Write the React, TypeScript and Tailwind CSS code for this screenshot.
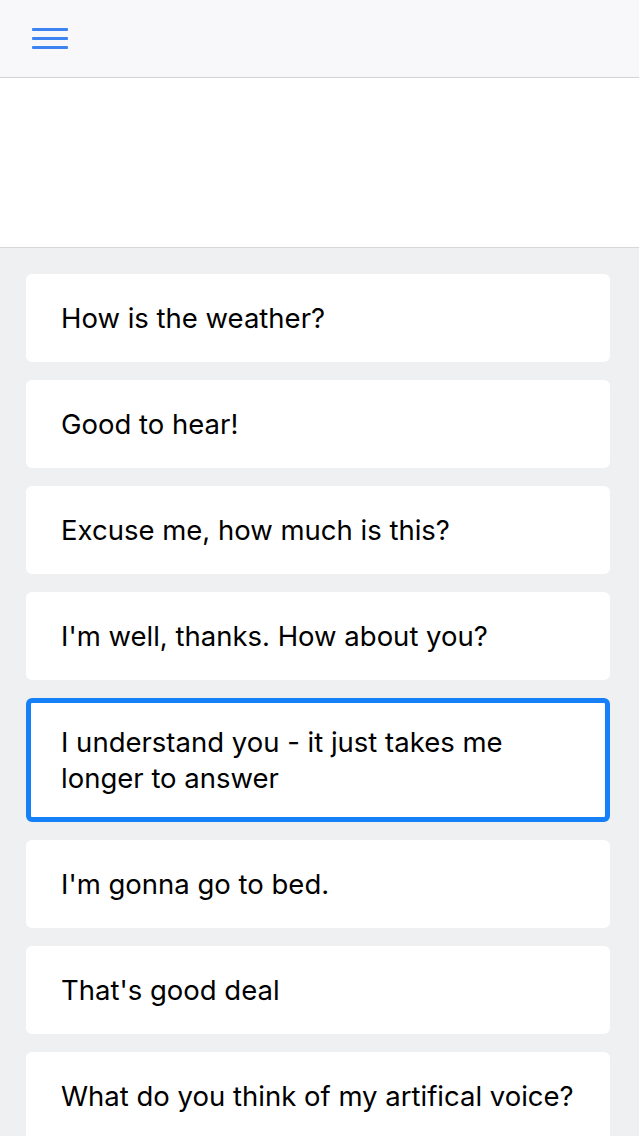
import { useState } from "react"

const phrases = [
  "How is the weather?",
  "Good to hear!",
  "Excuse me, how much is this?",
  "I'm well, thanks. How about you?",
  "I understand you - it just takes me longer to answer",
  "I'm gonna go to bed.",
  "That's good deal",
  "What do you think of my artifical voice?",
]

export default function App() {
  const [selected, setSelected] = useState(4)

  return (
    <div className="h-[1136px] overflow-hidden bg-[#eff0f2] font-['Inter',sans-serif] text-black">
      {/* Top bar */}
      <div className="h-[78px] bg-[#f8f7f9] border-b border-[#d3d2d6] flex items-center px-[32px]">
        <button className="flex flex-col gap-[6px] w-[36px] mb-[1px]">
          <span className="block h-[3px] bg-[#3d83f1] rounded-[1px]" />
          <span className="block h-[3px] bg-[#3d83f1] rounded-[1px]" />
          <span className="block h-[3px] bg-[#3d83f1] rounded-[1px]" />
        </button>
      </div>

      {/* Text output area */}
      <div className="h-[170px] bg-white border-b border-[#d8d8dc]" />

      {/* Phrase list */}
      <div className="pl-[26px] pr-[29px] pt-[26px] flex flex-col gap-[18px]">
        {phrases.map((p, i) => (
          <button
            key={p}
            onClick={() => setSelected(i)}
            className={`text-left bg-white rounded-[6px] text-[27.5px] leading-[36px] ${
              selected === i ? "border-[5px] border-[#1580f7] pl-[30px] pr-[19px] py-[21px]" : "pl-[35px] pr-[24px] py-[26px]"
            }`}
          >
            {p}
          </button>
        ))}
      </div>
    </div>
  )
}
